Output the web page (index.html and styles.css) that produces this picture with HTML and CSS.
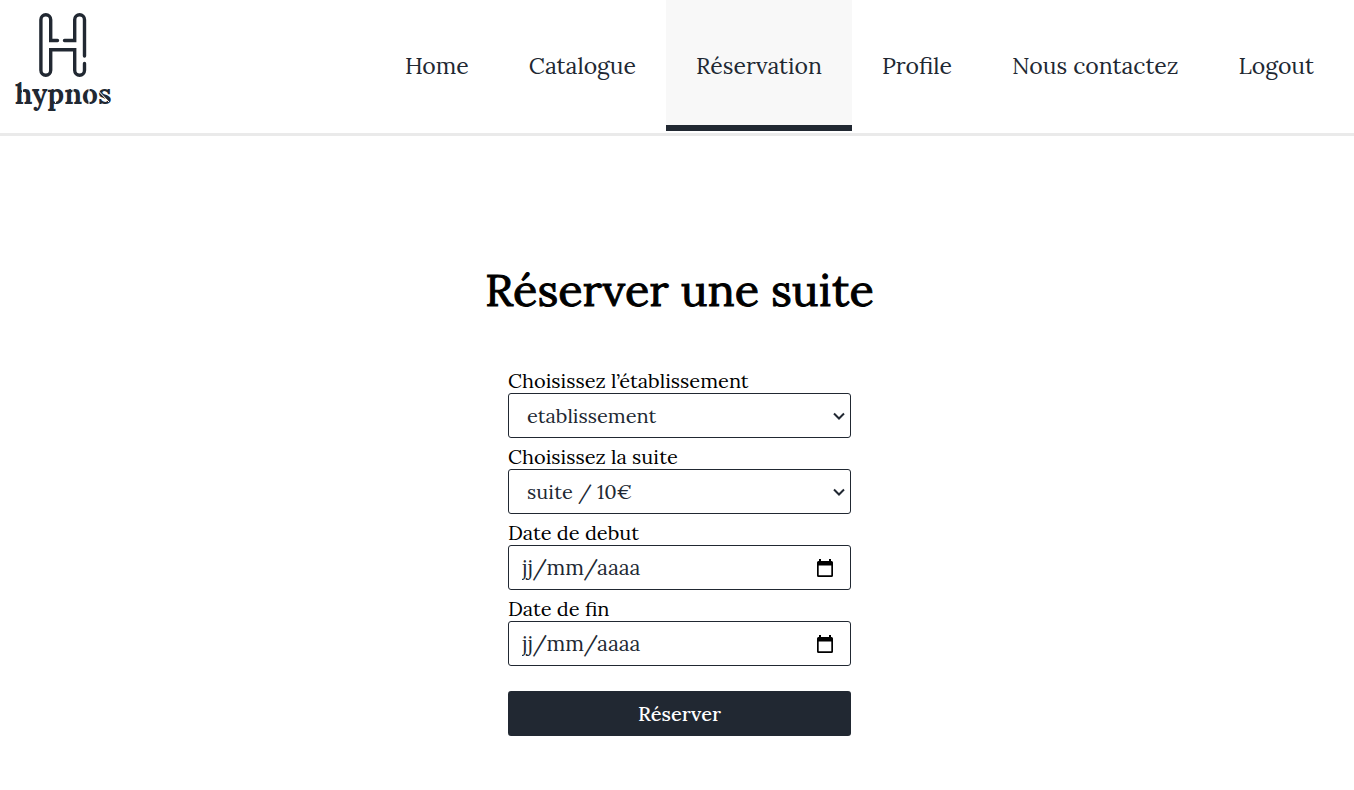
FILE: index.html
```html
<!DOCTYPE html>
<html lang="fr">
<head>
<meta charset="utf-8">
<meta name="viewport" content="width=device-width, initial-scale=1">
<title>Hypnos</title>
<link rel="stylesheet" href="styles.css">
</head>
<body>
<header class="header">
  <a class="logo" href="#" aria-label="hypnos">
    <svg class="logo-art" viewBox="0 0 125 125" aria-hidden="true">
      <g class="logo-lines">
        <path d="M57.500 40.500H50.700V19.700a4.900 4.900 0 0 0-9.800 0V70.300a4.900 4.900 0 0 0 9.800 0V49.800H74.700V70.300a4.900 4.900 0 0 0 9.800 0V63.500"/>
        <path d="M64.500 40.500H74.700V19.700a4.900 4.900 0 0 1 9.800 0V56"/>
      </g>
      <text class="logo-word" x="15" y="104">hypnos</text>
      <path class="logo-cuts" d="M22.500 88V102M55.500 92V103M73 88V102M89 88V106M98.500 91L109 102"/>
    </svg>
  </a>
  <nav class="nav">
    <a class="nav-link" href="#">Home</a>
    <a class="nav-link" href="#">Catalogue</a>
    <a class="nav-link nav-link-active" href="#" aria-current="page">Réservation</a>
    <a class="nav-link" href="#">Profile</a>
    <a class="nav-link" href="#">Nous contactez</a>
    <a class="nav-link" href="#">Logout</a>
  </nav>
</header>
<main class="main">
  <h1 class="title">Réserver une suite</h1>
  <form class="form">
    <div class="field">
      <label class="label" for="hotel">Choisissez l’établissement</label>
      <div class="control choice">
        <select class="select" id="hotel"><option>etablissement</option></select>
        <svg class="arrow" viewBox="0 0 12 8" aria-hidden="true"><path d="M1 1.500L6 6.500L11 1.500"/></svg>
      </div>
    </div>
    <div class="field">
      <label class="label" for="suite">Choisissez la suite</label>
      <div class="control choice">
        <select class="select" id="suite"><option>suite / 10€</option></select>
        <svg class="arrow" viewBox="0 0 12 8" aria-hidden="true"><path d="M1 1.500L6 6.500L11 1.500"/></svg>
      </div>
    </div>
    <div class="field">
      <label class="label" for="start">Date de debut</label>
      <div class="control date">
        <input class="date-input" id="start" type="text" placeholder="jj/mm/aaaa">
        <button class="date-button" type="button" aria-label="Ouvrir le calendrier">
          <svg class="date-icon" viewBox="0 0 18 18" aria-hidden="true"><path d="M3 0h2v2h8V0h2v2h.5A1.5 1.5 0 0 1 17 3.500V16.500a1.500 1.500 0 0 1-1.500 1.500h-13A1.500 1.500 0 0 1 1 16.500V3.500A1.500 1.500 0 0 1 2.500 2H3zM2.700 6.500v9.800h12.600V6.500z" fill-rule="evenodd"/></svg>
        </button>
      </div>
    </div>
    <div class="field">
      <label class="label" for="end">Date de fin</label>
      <div class="control date">
        <input class="date-input" id="end" type="text" placeholder="jj/mm/aaaa">
        <button class="date-button" type="button" aria-label="Ouvrir le calendrier">
          <svg class="date-icon" viewBox="0 0 18 18" aria-hidden="true"><path d="M3 0h2v2h8V0h2v2h.5A1.5 1.5 0 0 1 17 3.500V16.500a1.500 1.500 0 0 1-1.500 1.500h-13A1.500 1.500 0 0 1 1 16.500V3.500A1.500 1.500 0 0 1 2.500 2H3zM2.700 6.500v9.800h12.600V6.500z" fill-rule="evenodd"/></svg>
        </button>
      </div>
    </div>
    <button class="submit" type="submit">Réserver</button>
  </form>
</main>
</body>
</html>
```
FILE: styles.css
```css
* { box-sizing: border-box; }

body {
  margin: 0;
  background: #fff;
  color: #000;
  font-family: Lora, "Liberation Serif", serif;
}

.header {
  display: flex;
  justify-content: space-between;
  align-items: flex-start;
  padding: 0 10px 2px 0;
  border-bottom: 3px solid #eaeaea;
}

.logo { display: block; }

.logo-art {
  display: block;
  width: 125px;
  height: 125px;
}

.logo-lines {
  fill: none;
  stroke: #212832;
  stroke-width: 3.4;
  stroke-linecap: round;
}

.logo-word {
  fill: #212832;
  font-size: 28px;
  font-weight: 700;
}

.logo-cuts {
  fill: none;
  stroke: #fff;
  stroke-width: 1;
}

.nav { display: flex; }

.nav-link {
  display: flex;
  align-items: center;
  height: 131px;
  padding: 0 30px;
  color: #212832;
  font-size: 23px;
  text-decoration: none;
}

.nav-link-active {
  background: #f8f8f8;
  box-shadow: inset 0 -6px #212832;
}

.main {
  display: flex;
  flex-direction: column;
  align-items: center;
  padding: 124px 0 54px 5px;
}

.title {
  margin: 0;
  font-size: 45px;
  font-weight: 400;
  line-height: 60px;
  -webkit-text-stroke: 1px #000;
}

.form {
  display: flex;
  flex-direction: column;
  gap: 7px;
  width: 100%;
  max-width: 343px;
  margin-top: 49px;
}

.field {
  display: flex;
  flex-direction: column;
}

.label {
  font-size: 20px;
  line-height: 24px;
}

.control {
  width: 100%;
  height: 45px;
  border: 1px solid #212832;
  border-radius: 3px;
  background: #fff;
  color: #212832;
}

.choice { display: grid; }

.select {
  grid-area: 1 / 1;
  width: 100%;
  padding: 0 24px 0 18px;
  border: 0;
  background: none;
  color: inherit;
  font-family: inherit;
  font-size: 20px;
  appearance: none;
}

.arrow {
  grid-area: 1 / 1;
  place-self: center end;
  width: 12px;
  height: 8px;
  margin-right: 5px;
  fill: none;
  stroke: #212832;
  stroke-width: 2;
  pointer-events: none;
}

.date {
  display: flex;
  align-items: center;
  padding: 0 16px 0 13px;
}

.date-input {
  flex: 1;
  min-width: 0;
  padding: 0;
  border: 0;
  background: none;
  color: inherit;
  font-family: inherit;
  font-size: 21px;
}

.date-input::placeholder {
  color: #212832;
  opacity: 1;
}

.date-button {
  padding: 0;
  border: 0;
  background: none;
}

.date-icon {
  display: block;
  width: 18px;
  height: 18px;
}

.submit {
  height: 45px;
  margin-top: 18px;
  border: 0;
  border-radius: 3px;
  background: #212832;
  color: #fff;
  font-family: inherit;
  font-size: 20px;
  font-weight: 500;
}
```
